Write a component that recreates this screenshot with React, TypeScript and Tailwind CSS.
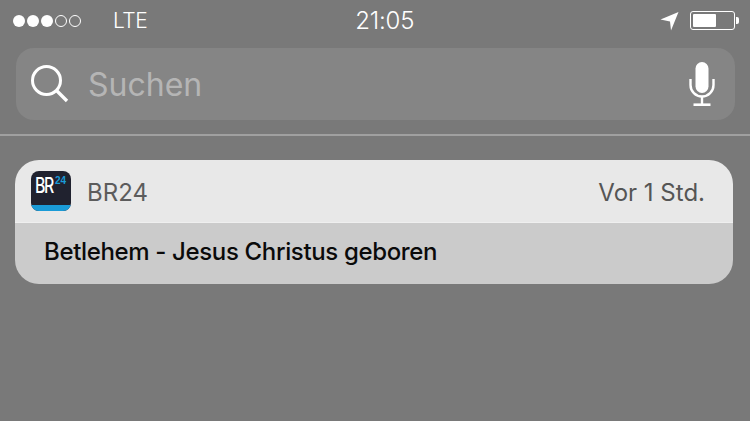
export default function App() {
  return (
    <div className="w-[750px] h-[421px] overflow-hidden bg-[#797979] flex flex-col font-['Inter','Liberation_Sans',sans-serif]">
      {/* status bar */}
      <div className="h-[48px] shrink-0 flex items-start">
        <div className="flex items-center gap-[2px] ml-[13px] mt-[15px]">
          <span className="w-[12px] h-[12px] rounded-full bg-white" />
          <span className="w-[12px] h-[12px] rounded-full bg-white" />
          <span className="w-[12px] h-[12px] rounded-full bg-white" />
          <span className="w-[12px] h-[12px] rounded-full border border-white" />
          <span className="w-[12px] h-[12px] rounded-full border border-white" />
        </div>
        <span className="ml-[32px] mt-[9px] text-[21px] leading-[24px] text-white font-light tracking-[-0.5px]">LTE</span>
        <span className="ml-[208px] mt-[9px] text-[24px] leading-[24px] text-white font-light tracking-[-0.2px]">21:05</span>
        <svg className="ml-[246px] mt-[11px]" width="19" height="20" viewBox="0 0 19 20">
          <path d="M18.5 1 L0.5 8.5 L10 10.5 L11 19.5 Z" fill="#fff" />
        </svg>
        <div className="ml-[11px] mt-[11px] flex items-center">
          <div className="w-[45px] h-[19px] rounded-[3px] border border-white p-[2px]">
            <div className="w-[23px] h-full bg-white rounded-[1px]" />
          </div>
          <div className="w-[3px] h-[7px] bg-white rounded-r-[2px] ml-[1px]" />
        </div>
      </div>
      {/* search */}
      <div className="mx-[16px] w-[719px] h-[72px] shrink-0 rounded-[18px] bg-[#858585] flex items-center">
        <svg className="ml-[15px]" width="38" height="38" viewBox="0 0 38 38" fill="none" stroke="#fff">
          <circle cx="15.5" cy="15.5" r="14" strokeWidth="3" />
          <path d="M25.5 25.5 L36 36" strokeWidth="3.4" />
        </svg>
        <span className="ml-[19px] mt-[2px] text-[32px] leading-[40px] text-[#b5b5b5] font-normal">Suchen</span>
        <svg className="ml-auto mr-[20px]" width="26" height="44" viewBox="0 0 26 44" fill="none" stroke="#fff">
          <rect x="6.5" y="0" width="13" height="31" rx="6.5" fill="#fff" stroke="none" />
          <path d="M1.5 17 V23 A11.5 11.5 0 0 0 24.5 23 V17" strokeWidth="2.4" />
          <path d="M13 35 V42" strokeWidth="2.4" />
          <path d="M4.5 42.7 H21.5" strokeWidth="2.6" />
        </svg>
      </div>
      {/* divider */}
      <div className="mt-[14px] h-[2px] shrink-0 bg-[#a0a0a0]" />
      {/* notification */}
      <div className="ml-[15px] mt-[24px] w-[718px] h-[124px] shrink-0 rounded-[24px] overflow-hidden flex flex-col">
        <div className="h-[63px] shrink-0 bg-[#e8e8e8] flex items-center border-b border-[#efefef]">
          <div className="relative ml-[16px] w-[40px] h-[40px] rounded-[8px] overflow-hidden bg-[#20222f] shrink-0">
            <div className="absolute left-0 right-0 bottom-0 h-[6px] bg-[#1a9bd7]" />
            <span className="absolute left-[4px] top-[3px] text-white text-[22px] leading-[22px] font-medium tracking-[-2px] origin-left scale-x-[0.72]">BR</span>
            <span className="absolute left-[24px] top-[5px] text-[#1a9bd7] text-[10px] leading-[9px] font-bold font-['Liberation_Sans',sans-serif]">24</span>
          </div>
          <span className="ml-[16px] mt-[3px] text-[24px] leading-[28px] text-[#5c5c5c] font-normal">BR24</span>
          <span className="ml-auto mr-[28px] mt-[3px] text-[24px] leading-[28px] text-[#555555] font-normal">Vor 1 Std.</span>
        </div>
        <div className="flex-1 bg-[#cbcbcb] flex items-center">
          <span className="ml-[29px] -mt-[4px] text-[24px] leading-[28px] text-[#0a0a0a] font-medium tracking-[-0.35px]">Betlehem - Jesus Christus geboren</span>
        </div>
      </div>
    </div>
  );
}
